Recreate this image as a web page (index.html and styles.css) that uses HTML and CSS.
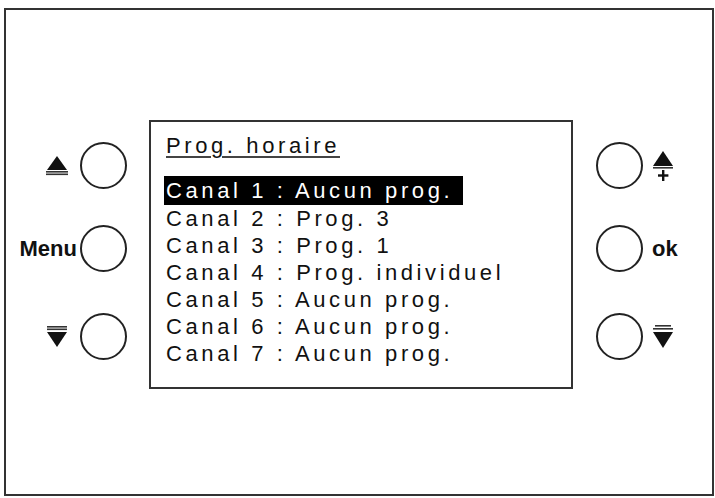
FILE: index.html
```html
<!DOCTYPE html>
<html lang="fr">
<head>
  <meta charset="UTF-8" />
  <title>Prog. horaire</title>
  <link rel="stylesheet" href="styles.css">
</head>
<body>
  <div class="frame">
    <div class="panel">
      <div class="keys keys-left">
        <div class="key-row row-1">
          <svg class="sym" width="22" height="20" viewBox="0 0 22 20">
            <polygon points="11,0 21,14 1,14" fill="#111"/>
            <rect x="0" y="15" width="22" height="1.6" fill="#333"/>
            <rect x="0" y="17.5" width="22" height="1.6" fill="#333"/>
          </svg>
          <span class="key"></span>
        </div>
        <div class="key-row row-2">
          <span class="label label-menu">Menu</span>
          <span class="key"></span>
        </div>
        <div class="key-row row-3">
          <svg class="sym" width="22" height="22" viewBox="0 0 22 22">
            <rect x="1" y="0" width="20" height="1.6" fill="#333"/>
            <rect x="1" y="2.5" width="20" height="1.6" fill="#333"/>
            <polygon points="1,6 21,6 11,21" fill="#111"/>
          </svg>
          <span class="key"></span>
        </div>
      </div>

      <div class="screen">
        <div class="screen-title">Prog. horaire</div>
        <ul class="channels">
          <li><span class="selected">Canal 1 : Aucun prog.</span></li>
          <li>Canal 2 : Prog. 3</li>
          <li>Canal 3 : Prog. 1</li>
          <li>Canal 4 : Prog. individuel</li>
          <li>Canal 5 : Aucun prog.</li>
          <li>Canal 6 : Aucun prog.</li>
          <li>Canal 7 : Aucun prog.</li>
        </ul>
      </div>

      <div class="keys keys-right">
        <div class="key-row row-1">
          <span class="key"></span>
          <svg class="sym" width="20" height="30" viewBox="0 0 20 30">
            <polygon points="10,0 20,15 0,15" fill="#111"/>
            <rect x="0" y="16" width="20" height="1.6" fill="#333"/>
            <rect x="9" y="19" width="2.4" height="11" fill="#111"/>
            <rect x="5" y="23.3" width="10.4" height="2.4" fill="#111"/>
          </svg>
        </div>
        <div class="key-row row-2">
          <span class="key"></span>
          <span class="label label-ok">ok</span>
        </div>
        <div class="key-row row-3">
          <span class="key"></span>
          <svg class="sym" width="20" height="24" viewBox="0 0 20 24">
            <rect x="2" y="0" width="16" height="1.6" fill="#333"/>
            <rect x="0" y="3" width="20" height="1.6" fill="#333"/>
            <polygon points="0,7 20,7 10,23" fill="#111"/>
          </svg>
        </div>
      </div>
    </div>
  </div>
</body>
</html>
```

FILE: styles.css
```css
body {
  margin: 0;
  background-color: #ffffff;
  font-family: 'Liberation Sans', Arial, sans-serif;
  color: #111;
}
.frame {
  margin: 8px 0 0 4px;
  width: 706px;
  height: 484px;
  border: 2px solid #333;
}
.panel {
  display: grid;
  grid-template-columns: 143px 424px 1fr;
  padding-top: 110px;
}
.keys {
  display: flex;
  flex-direction: column;
  padding-top: 22px;
}
.keys-left {
  align-items: flex-end;
  padding-right: 22px;
}
.keys-right {
  align-items: flex-start;
  padding-left: 23px;
}
.key-row {
  display: flex;
  align-items: center;
  height: 47px;
}
.row-2 {
  margin-top: 36px;
}
.row-3 {
  margin-top: 41px;
}
.key {
  display: block;
  width: 43px;
  height: 43px;
  border: 2px solid #222;
  border-radius: 50%;
}
.keys-left .sym {
  margin-right: 12px;
}
.keys-right .sym {
  margin-left: 10px;
}
.label {
  font-weight: bold;
  font-size: 22px;
  color: #111;
}
.label-menu {
  margin-right: 3px;
}
.label-ok {
  margin-left: 9px;
}
.screen {
  height: 255px;
  border: 2px solid #333;
  padding: 10px 0 0 15px;
  font-size: 22px;
  letter-spacing: 3.6px;
}
.screen-title {
  line-height: 27px;
  text-decoration: underline;
  text-decoration-thickness: 2px;
  text-underline-offset: 3px;
  text-decoration-color: #444;
  margin-bottom: 17px;
}
.channels {
  list-style: none;
  margin: 0;
  padding: 0;
  line-height: 27px;
}
.selected {
  display: inline-block;
  background-color: #000;
  color: #fff;
  margin-left: -2px;
  padding: 1px 10px 1px 2px;
  line-height: 27px;
}
```
